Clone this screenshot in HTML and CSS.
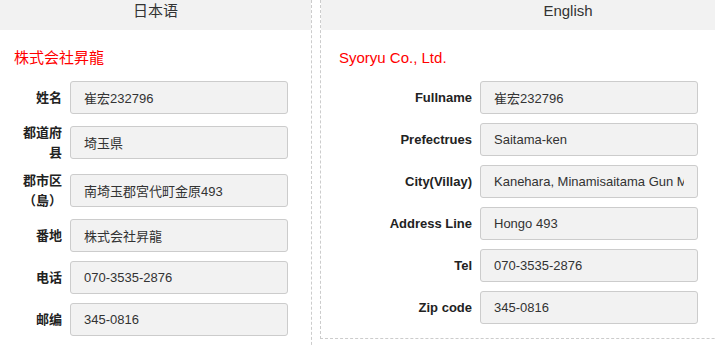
FILE: index.html
```html
<!DOCTYPE html>
<html lang="zh-CN">
  <head>
    <meta charset="UTF-8" />
    <meta name="viewport" content="width=device-width, initial-scale=1.0" />
    <title>Company Info</title>
    <link rel="stylesheet" href="styles.css">
  </head>
  <body>
    <div class="page">
      <!-- Japanese side -->
      <section class="panel panel-jp">
        <div class="panel-head">日本语</div>
        <div class="panel-body">
          <h2 class="company">株式会社昇龍</h2>
          <div class="field">
            <label>姓名</label>
            <input type="text" value="崔宏232796" readonly>
          </div>
          <div class="field">
            <label>都道府县</label>
            <input type="text" value="埼玉県" readonly>
          </div>
          <div class="field">
            <label>郡市区（島）</label>
            <input type="text" value="南埼玉郡宮代町金原493" readonly>
          </div>
          <div class="field">
            <label>番地</label>
            <input type="text" value="株式会社昇龍" readonly>
          </div>
          <div class="field">
            <label>电话</label>
            <input type="text" value="070-3535-2876" readonly>
          </div>
          <div class="field">
            <label>邮编</label>
            <input type="text" value="345-0816" readonly>
          </div>
        </div>
      </section>

      <!-- English side -->
      <section class="panel panel-en">
        <div class="panel-head">English</div>
        <div class="panel-body">
          <h2 class="company">Syoryu Co., Ltd.</h2>
          <div class="field">
            <label>Fullname</label>
            <input type="text" value="崔宏232796" readonly>
          </div>
          <div class="field">
            <label>Prefectrues</label>
            <input type="text" value="Saitama-ken" readonly>
          </div>
          <div class="field">
            <label>City(Villay)</label>
            <input type="text" value="Kanehara, Minamisaitama Gun Miyashiro Machi" readonly>
          </div>
          <div class="field">
            <label>Address Line</label>
            <input type="text" value="Hongo 493" readonly>
          </div>
          <div class="field">
            <label>Tel</label>
            <input type="text" value="070-3535-2876" readonly>
          </div>
          <div class="field">
            <label>Zip code</label>
            <input type="text" value="345-0816" readonly>
          </div>
        </div>
      </section>
    </div>
  </body>
</html>
```

FILE: styles.css
```css
/* page */
html,
body {
  margin: 0;
  padding: 0;
  overflow: hidden;
}

body {
  font-family: "Liberation Sans", "Noto Sans CJK SC", sans-serif;
  color: #333;
  background-color: #fff;
}

.page {
  display: flex;
  align-items: flex-start;
  gap: 8px;
  width: 1000px;
}

/* panels */
.panel-jp {
  width: 311px;
  min-height: 360px;
  border-right: 1px dashed #ccc;
}

.panel-en {
  width: 494px;
  border-left: 1px dashed #ccc;
  border-bottom: 1px dashed #ccc;
}

.panel-head {
  height: 30px;
  line-height: 22px;
  font-size: 15px;
  text-align: center;
  background-color: #f2f2f2;
}

.panel-body {
  padding: 17px 23px 14px 14px;
}

.panel-en .panel-body {
  padding-left: 18px;
}

.company {
  margin: 0 0 12px;
  font-size: 15px;
  line-height: 22px;
  font-weight: normal;
  color: #f00;
}

/* form rows */
.field {
  display: flex;
  align-items: center;
  gap: 8px;
}

.field + .field {
  margin-top: 9px;
}

.field label {
  flex: none;
  width: 48px;
  text-align: right;
  font-size: 13px;
  line-height: 19.5px;
  font-weight: bold;
  color: #222;
}

.panel-en .field label {
  width: 133px;
}

.field input {
  flex: none;
  width: 218px;
  height: 33px;
  box-sizing: border-box;
  margin: 0;
  padding: 0 13px;
  border: 1px solid #ccc;
  border-radius: 3px;
  background-color: #f2f2f2;
  font-family: "Liberation Sans", "Noto Sans CJK SC", sans-serif;
  font-size: 13px;
  color: #333;
  outline: none;
}
```
